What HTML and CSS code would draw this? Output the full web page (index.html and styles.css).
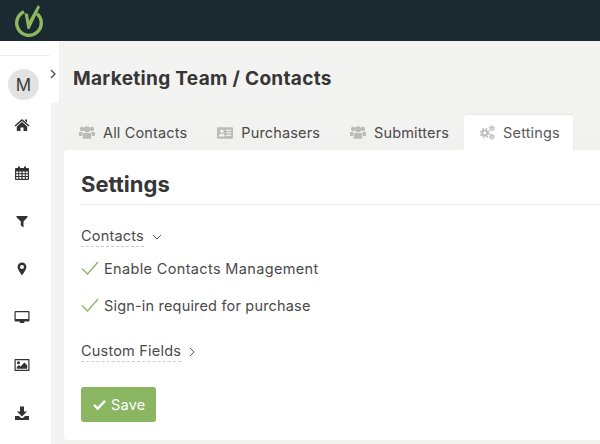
FILE: index.html
```html
<!DOCTYPE html>
<html lang="en">

<head>
    <meta charset="UTF-8">
    <meta name="viewport" content="width=device-width, initial-scale=1.0">
    <title>Marketing Team / Contacts</title>
    <link rel="stylesheet" href="styles.css">
</head>

<body>
  <header class="topbar">
    <svg class="logo" viewBox="0 0 30 36" width="30" height="36">
      <path d="M10 8.800 A12.300 12.300 0 1 0 23 10.700" fill="none" stroke="#8fb75f" stroke-width="3.400"/>
      <path d="M10.500 10 L14 11 L15 18 L24 2 L26 4 L15.500 26 L13.500 26 Z" fill="#8fb75f"/>
    </svg>
  </header>

  <div class="layout">
    <nav class="sidebar">
      <div class="user-block">
        <div class="avatar">M</div>
        <svg class="expand" viewBox="0 0 8 10" width="8" height="10"><path d="M2 1 L6 5 L2 9" fill="none" stroke="#444" stroke-width="1.2"/></svg>
      </div>
      <ul class="side-icons">
        <li><svg viewBox="0 0 16 16" width="16" height="16"><path d="M8 2 L15.500 8.600 L14.600 9.600 L8 3.900 L1.400 9.600 L.5 8.600 Z M11 2.500 H13 V5.500 L11 3.800 Z M8 5 L13.200 9.500 V14 H9.500 V10.500 H6.500 V14 H2.800 V9.500 Z"/></svg></li>
        <li><svg viewBox="0 0 16 16" width="16" height="16"><path fill-rule="evenodd" d="M2 3 H4 V1.500 H6 V3 H10 V1.500 H12 V3 H14 Q15 3 15 4 V14 Q15 15 14 15 H2 Q1 15 1 14 V4 Q1 3 2 3 Z M2.200 6.500 V8.200 H4.200 V6.500 Z M5.200 6.500 V8.200 H7.400 V6.500 Z M8.600 6.500 V8.200 H10.800 V6.500 Z M11.800 6.500 V8.200 H13.800 V6.500 Z M2.200 9.200 V11 H4.200 V9.200 Z M5.200 9.200 V11 H7.400 V9.200 Z M8.600 9.200 V11 H10.800 V9.200 Z M11.800 9.200 V11 H13.800 V9.200 Z M2.200 12 V13.800 H4.200 V12 Z M5.200 12 V13.800 H7.400 V12 Z M8.600 12 V13.800 H10.800 V12 Z M11.800 12 V13.800 H13.800 V12 Z"/></svg></li>
        <li><svg viewBox="0 0 16 16" width="16" height="16"><path d="M2.500 3 H13.500 V4.200 L9.500 8.600 V14.500 L6.800 12.400 V8.600 L2.500 4.200 Z"/></svg></li>
        <li><svg viewBox="0 0 16 16" width="16" height="16"><path fill-rule="evenodd" d="M8 1.500 A4.400 4.400 0 0 1 12.400 5.900 C12.400 8.400 9.500 12 8 14.500 C6.500 12 3.600 8.400 3.600 5.900 A4.400 4.400 0 0 1 8 1.500 Z M8 4 A2 2 0 1 0 8 8 A2 2 0 1 0 8 4 Z"/></svg></li>
        <li><svg viewBox="0 0 16 16" width="16" height="16"><path fill-rule="evenodd" d="M1.500 2 H14.500 Q15.500 2 15.500 3 V11.500 Q15.500 12.500 14.500 12.500 H10 L10.500 14 H5.500 L6 12.500 H1.500 Q.5 12.500 .5 11.500 V3 Q.5 2 1.500 2 Z M1.700 3.200 V10 H14.300 V3.200 Z"/></svg></li>
        <li><svg viewBox="0 0 16 16" width="16" height="16"><path fill-rule="evenodd" d="M1 2 H15 Q15.500 2 15.500 2.500 V13.500 Q15.500 14 15 14 H1 Q.5 14 .5 13.500 V2.500 Q.5 2 1 2 Z M1.700 3.200 V12.800 H14.300 V3.200 Z M4.500 4.200 A1.500 1.500 0 1 1 4.500 7.200 A1.500 1.500 0 1 1 4.500 4.200 Z M2.800 11.800 V10 L5 8 L6.500 9.400 L10.500 5.400 L13.200 8.200 V11.800 Z"/></svg></li>
        <li><svg viewBox="0 0 16 16" width="16" height="16"><path fill-rule="evenodd" d="M6 1.500 H10 V6.500 H13 L8 11.500 L3 6.500 H6 Z M1 11 H5 L7 13 H9 L11 11 H15 V15 H1 Z"/></svg></li>
      </ul>
    </nav>

    <main class="content">
      <h1 class="page-title">Marketing Team / Contacts</h1>

      <div class="tabs">
        <a class="tab">
          <svg class="tab-icon" viewBox="0 0 18 16" width="16" height="15">
            <defs>
              <g id="group">
                <circle cx="3.500" cy="4" r="2.500"/>
                <circle cx="14.500" cy="4" r="2.500"/>
                <circle cx="9" cy="4.500" r="3.400"/>
                <path d="M0 7.500 H4 L3.500 12 H0 Z M18 7.500 H14 L14.500 12 H18 Z M4.500 8.500 H13.500 L14 15 H4 Z"/>
              </g>
            </defs>
            <use href="#group"/>
          </svg>
          All Contacts
        </a>
        <a class="tab">
          <svg class="tab-icon" viewBox="0 0 18 16" width="16" height="15"><path fill-rule="evenodd" d="M1 2 H17 Q18 2 18 3 V14 Q18 15 17 15 H1 Q0 15 0 14 V3 Q0 2 1 2 Z M5.500 4.500 A2 2 0 1 0 5.500 8.500 A2 2 0 1 0 5.500 4.500 Z M2 12.500 H9 C9 10.500 8 9.500 5.500 9.500 C3 9.500 2 10.500 2 12.500 Z M10.500 5 V6.200 H16 V5 Z M10.500 7.800 V9 H16 V7.800 Z M10.500 10.600 V11.800 H16 V10.600 Z"/></svg>
          Purchasers
        </a>
        <a class="tab">
          <svg class="tab-icon" viewBox="0 0 18 16" width="16" height="15"><use href="#group"/></svg>
          Submitters
        </a>
        <a class="tab tab-active">
          <svg class="tab-icon" viewBox="0 0 18 16" width="16" height="15">
            <g fill="none">
              <circle cx="6.500" cy="8.500" r="2.800" stroke-width="2"/>
              <circle cx="6.500" cy="8.500" r="4.800" stroke-width="1.800" stroke-dasharray="2 1.800"/>
              <circle cx="14.500" cy="3.300" r="1.500" stroke-width="1.400"/>
              <circle cx="14.500" cy="3.300" r="2.800" stroke-width="1.200" stroke-dasharray="1.200 1"/>
              <circle cx="14.500" cy="12.700" r="1.500" stroke-width="1.400"/>
              <circle cx="14.500" cy="12.700" r="2.800" stroke-width="1.200" stroke-dasharray="1.200 1"/>
            </g>
          </svg>
          Settings
        </a>
      </div>

      <section class="card">
        <h2 class="card-title">Settings</h2>

        <div class="group-head">
          <span class="group-name">Contacts</span>
          <svg viewBox="0 0 10 6" width="10" height="6"><path d="M1 1 L5 5 L9 1" fill="none" stroke="#555" stroke-width="1"/></svg>
        </div>

        <div class="check-row">
          <svg class="check" viewBox="0 0 18 14" width="18" height="14"><path d="M1 7.500 L6.500 13 L17 1" fill="none" stroke="#8fb56c" stroke-width="1.400"/></svg>
          Enable Contacts Management
        </div>
        <div class="check-row">
          <svg class="check" viewBox="0 0 18 14" width="18" height="14"><path d="M1 7.500 L6.500 13 L17 1" fill="none" stroke="#8fb56c" stroke-width="1.400"/></svg>
          Sign-in required for purchase
        </div>

        <div class="group-head group-closed">
          <span class="group-name">Custom Fields</span>
          <svg viewBox="0 0 6 10" width="6" height="10"><path d="M1 1 L5 5 L1 9" fill="none" stroke="#555" stroke-width="1"/></svg>
        </div>

        <button class="btn-save" type="button">
          <svg viewBox="0 0 14 12" width="13" height="11"><path d="M1 6.500 L5 10.500 L13 2" fill="none" stroke="#fff" stroke-width="2.600"/></svg>
          Save
        </button>
      </section>
    </main>
  </div>
</body>

</html>
```

FILE: styles.css
```css
* {
    margin: 0;
    padding: 0;
    box-sizing: border-box;
}

html, body {
    height: 444px;
    overflow: hidden;
}

body {
    font-family: 'Inter', 'Liberation Sans', sans-serif;
    background: #f3f3f1;
    color: #4a4a4a;
}

.topbar {
    height: 41px;
    background: #1b2a30;
    padding: 3px 0 0 14px;
}

.logo {
    display: block;
}

.layout {
    display: flex;
    height: 403px;
}

/* Sidebar */
.sidebar {
    width: 51px;
    flex-shrink: 0;
    background: #fff;
    position: relative;
    z-index: 1;
}

.user-block {
    width: 59px;
    height: 62px;
    background: #fff;
    padding-top: 13px;
    position: relative;
    display: flex;
}

.user-block::before {
    content: '';
    position: absolute;
    top: 14px;
    left: 0;
    width: 50px;
    height: 1px;
    background: #efefef;
}

.avatar {
    width: 31px;
    height: 31px;
    margin: 15px 0 0 8px;
    border-radius: 50%;
    background: #e2e2e2;
    color: #3a3a3a;
    font-size: 17px;
    font-weight: 400;
    display: flex;
    align-items: center;
    justify-content: center;
}

.expand {
    margin: 15px 0 0 10px;
}

.side-icons {
    list-style: none;
    padding-top: 14px;
}

.side-icons li {
    height: 48px;
    display: flex;
    justify-content: center;
    padding: 0 7px 0 0;
}

.side-icons svg {
    fill: #333;
}

/* Main area */
.content {
    flex: 1;
    min-width: 0;
    padding-left: 13px;
}

.page-title {
    font-size: 19px;
    font-weight: 700;
    color: #363636;
    padding: 27px 0 0 9px;
    line-height: 22px;
    height: 74px;
    letter-spacing: .32px;
}

.tabs {
    display: flex;
    height: 35px;
    background: linear-gradient(#f3f3f1, #f0f0ee);
}

.tab {
    display: flex;
    align-items: center;
    gap: 8px;
    font-size: 14.5px;
    color: #4a4a4a;
    padding: 0 15px;
    letter-spacing: .15px;
}

.tab-icon {
    fill: #bbb;
    stroke: #bbb;
    stroke-width: 0;
}

.tab-active {
    background: #fff;
    color: #5a5a5a;
    border-radius: 3px 3px 0 0;
    box-shadow: 0 -1px 2px rgba(0, 0, 0, .06);
    padding-right: 13px;
}

.card {
    background: #fff;
    height: 290px;
    border-radius: 4px 0 0 4px;
    padding: 21px 0 0 17px;
}

.card-title {
    font-size: 22px;
    font-weight: 700;
    color: #363636;
    height: 34px;
    line-height: 26px;
    border-bottom: 1px solid #e8e8e8;
}

.group-head {
    display: flex;
    align-items: flex-start;
    gap: 8px;
    margin-top: 21px;
    height: 19px;
}

.group-head svg {
    align-self: center;
    margin-top: 2px;
}

.group-name {
    font-size: 14.5px;
    color: #4a4a4a;
    line-height: 19px;
    border-bottom: 1px dashed #ccc;
    height: 21px;
    letter-spacing: .2px;
}

.group-closed {
    margin-top: 26px;
}

.check-row {
    display: flex;
    align-items: center;
    gap: 5px;
    font-size: 14.5px;
    color: #4a4a4a;
    height: 20px;
    margin-top: 13px;
    letter-spacing: .35px;
}

.check-row + .check-row {
    margin-top: 17px;
    letter-spacing: .18px;
}

.btn-save {
    display: flex;
    align-items: center;
    gap: 5px;
    width: 75px;
    height: 35px;
    margin-top: 27px;
    padding-left: 12px;
    background: #8ab561;
    border: none;
    border-radius: 3px;
    color: #fff;
    font-family: inherit;
    font-size: 14.5px;
    letter-spacing: .2px;
}
```
